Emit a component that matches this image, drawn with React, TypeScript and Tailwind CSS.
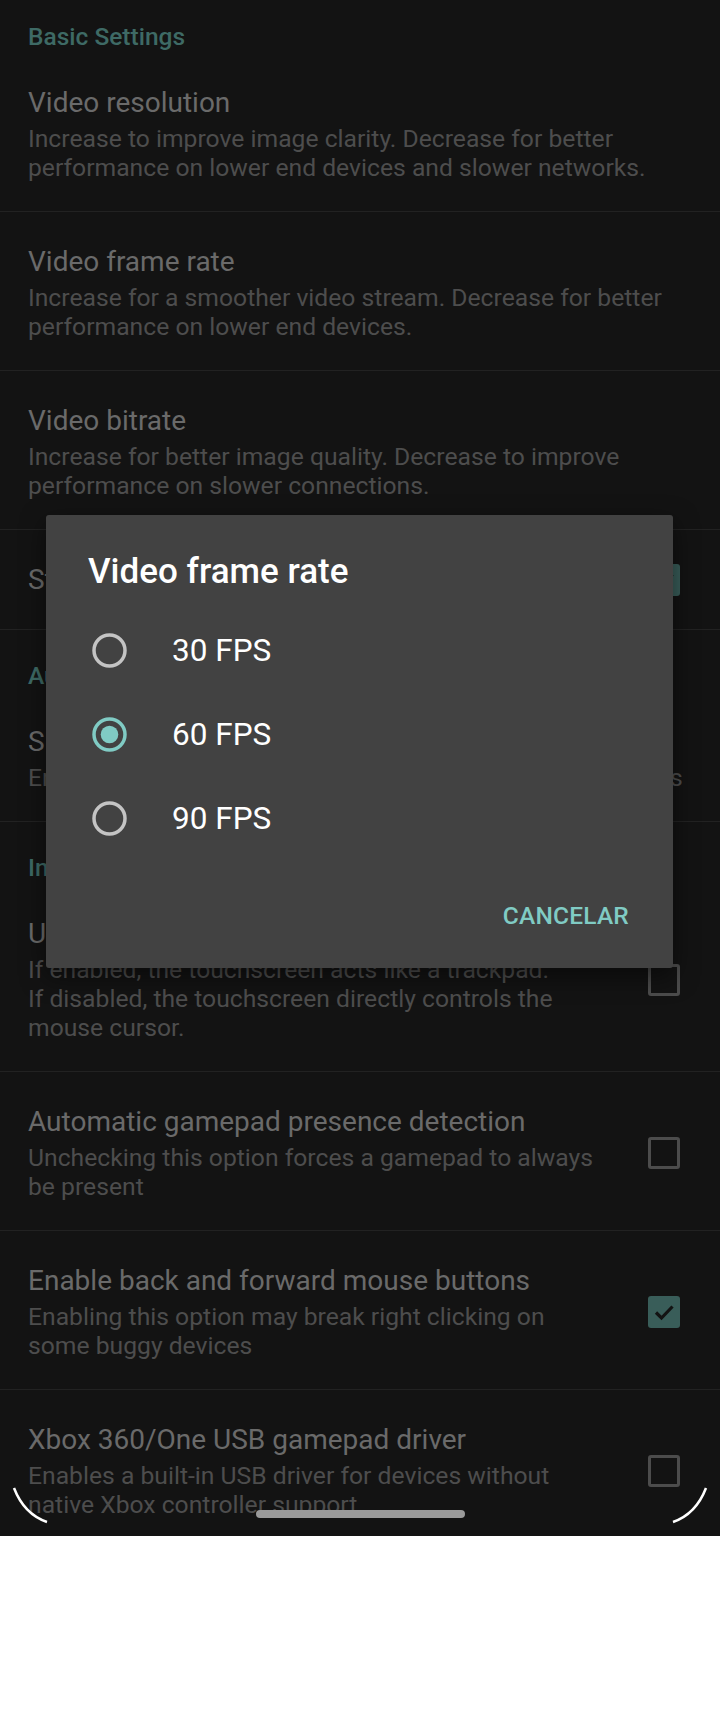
import React from "react";

type Row = {
  title: string;
  desc?: string | string[];
  check?: "on" | "off";
  wide?: boolean;
};

const Category: React.FC<{ label: string; first?: boolean }> = ({ label, first }) => (
  <div className={`h-[62px] pl-[28px] pt-[31px] ${first ? "-mt-[9px]" : ""}`}>
    <div className="text-[24.5px] leading-[29px] font-medium text-[#3e6a65]">{label}</div>
  </div>
);

const CheckBox: React.FC<{ on: boolean }> = ({ on }) =>
  on ? (
    <div className="w-[32px] h-[32px] rounded-[3px] bg-[#395d59] flex items-center justify-center">
      <svg width="24" height="24" viewBox="0 0 24 24">
        <path d="M4 12.5 L9.5 18 L20.5 6.5" fill="none" stroke="#131313" strokeWidth="3.2" />
      </svg>
    </div>
  ) : (
    <div className="w-[32px] h-[32px] rounded-[3px] border-[3.5px] border-[#4c4c4c]" />
  );

const SettingRow: React.FC<{ row: Row }> = ({ row }) => (
  <div
    className={`flex items-center border-b border-[#222222] pl-[28px] pr-[40px] pt-[33px] ${
      row.desc ? "pb-[29px]" : "pb-[33px]"
    }`}
  >
    <div className={`flex-1 ${row.check ? "pr-[30px]" : ""}`}>
      <div className="text-[28px] leading-[33px] text-[#6a6a6a] whitespace-nowrap">{row.title}</div>
      {row.desc && (
        <div
          className={`mt-[5px] text-[24.7px] leading-[29px] text-[#4d4d4d] ${
            row.wide ? "whitespace-nowrap tracking-[0.07px]" : ""
          }`}
        >
          {Array.isArray(row.desc)
            ? row.desc.map((l) => (
                <div key={l} className="whitespace-nowrap">
                  {l}
                </div>
              ))
            : row.desc}
        </div>
      )}
    </div>
    {row.check && <CheckBox on={row.check === "on"} />}
  </div>
);

const Radio: React.FC<{ on: boolean }> = ({ on }) => (
  <svg width="35" height="35" viewBox="0 0 35 35">
    <circle cx="17.5" cy="17.5" r="15.5" fill="none" stroke={on ? "#80cbc4" : "#c4c4c4"} strokeWidth="3.5" />
    {on && <circle cx="17.5" cy="17.5" r="8.8" fill="#80cbc4" />}
  </svg>
);

const basic: Row[] = [
  {
    title: "Video resolution",
    desc: "Increase to improve image clarity. Decrease for better performance on lower end devices and slower networks.",
  },
  {
    title: "Video frame rate",
    desc: "Increase for a smoother video stream. Decrease for better performance on lower end devices.",
  },
  {
    title: "Video bitrate",
    desc: "Increase for better image quality. Decrease to improve performance on slower connections.",
  },
  { title: "Stretch video to full-screen", check: "on" },
];

const input: Row[] = [
  {
    title: "Use the touchscreen as a trackpad",
    desc: [
      "If enabled, the touchscreen acts like a trackpad.",
      "If disabled, the touchscreen directly controls the",
      "mouse cursor.",
    ],
    check: "off",
  },
  {
    title: "Automatic gamepad presence detection",
    desc: ["Unchecking this option forces a gamepad to always", "be present"],
    check: "off",
  },
  {
    title: "Enable back and forward mouse buttons",
    desc: ["Enabling this option may break right clicking on", "some buggy devices"],
    check: "on",
  },
  {
    title: "Xbox 360/One USB gamepad driver",
    desc: ["Enables a built-in USB driver for devices without", "native Xbox controller support"],
    check: "off",
  },
];

const options = ["30 FPS", "60 FPS", "90 FPS"];

export default function App() {
  return (
    <div className="w-[720px] h-[1712px] bg-white font-['Roboto','Noto_Sans',sans-serif]">
      <div className="relative h-[1536px] overflow-hidden bg-[#131313]">
        <Category label="Basic Settings" first />
        {basic.map((r) => (
          <SettingRow key={r.title} row={r} />
        ))}
        <Category label="Audio Settings" />
        <SettingRow
          row={{
            title: "Surround sound configuration",
            desc: "Enable 5.1 or 7.1 surround sound for home-theater systems",
            wide: true,
          }}
        />
        <Category label="Input Settings" />
        {input.map((r) => (
          <SettingRow key={r.title} row={r} />
        ))}

        {/* dialog */}
        <div className="absolute left-[46px] top-[515px] w-[627px] h-[453px] rounded-[3px] bg-[#424242] shadow-[0_8px_24px_rgba(0,0,0,0.5)] flex flex-col">
          <div className="h-[93px] pl-[42px] pt-[36px]">
            <div className="text-[35px] leading-[41px] font-medium text-white">Video frame rate</div>
          </div>
          {options.map((o) => (
            <div key={o} className="h-[84px] flex items-center pl-[46px]">
              <Radio on={o === "60 FPS"} />
              <span className="ml-[45px] text-[31.5px] leading-[37px] text-white">{o}</span>
            </div>
          ))}
          <div className="flex-1 flex justify-end pr-[44px] pt-[41px]">
            <span className="text-[24.5px] leading-[29px] font-medium tracking-[0.2px] text-[#80cbc4]">CANCELAR</span>
          </div>
        </div>

        {/* nav bar */}
        <div className="absolute left-[256px] top-[1510px] w-[209px] h-[8px] rounded-full bg-[#9a9a9a]" />
        <svg className="absolute left-0 top-[1480px]" width="720" height="56" viewBox="0 1480 720 56">
          <path d="M14 1488 Q 24 1514 47 1522" fill="none" stroke="#ffffff" strokeWidth="2.5" />
          <path d="M706 1488 Q 696 1514 673 1522" fill="none" stroke="#ffffff" strokeWidth="2.5" />
        </svg>
      </div>
    </div>
  );
}
